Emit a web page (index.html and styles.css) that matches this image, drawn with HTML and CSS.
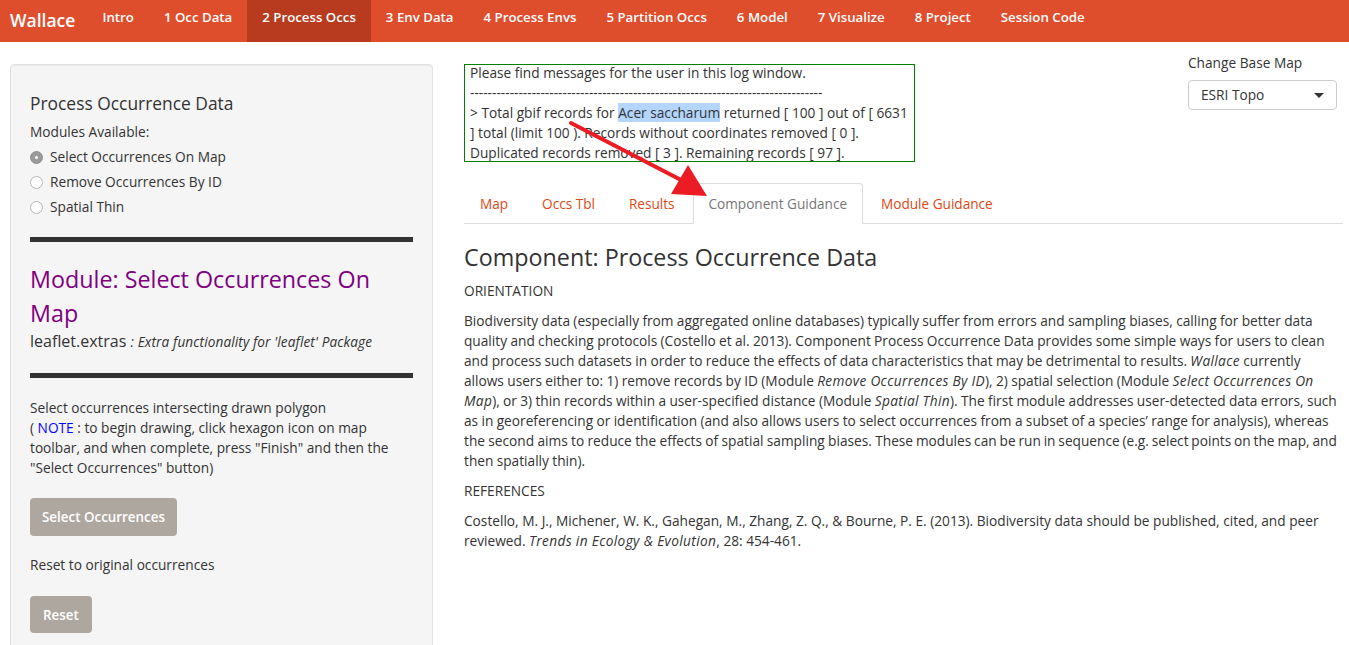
FILE: index.html
```html
<!DOCTYPE html>
<html>
<head>
<meta charset="utf-8">
<link rel="stylesheet" href="styles.css">
</head>
<body>
<nav class="navbar">
  <a class="brand">Wallace</a>
  <ul class="nav">
    <li><a>Intro</a></li>
    <li><a>1 Occ Data</a></li>
    <li class="active"><a>2 Process Occs</a></li>
    <li><a>3 Env Data</a></li>
    <li><a>4 Process Envs</a></li>
    <li><a>5 Partition Occs</a></li>
    <li><a>6 Model</a></li>
    <li><a>7 Visualize</a></li>
    <li><a>8 Project</a></li>
    <li><a>Session Code</a></li>
  </ul>
</nav>
<div class="page">
  <aside class="well">
    <h4 class="comp-title">Process Occurrence Data</h4>
    <div class="label">Modules Available:</div>
    <div class="radios">
      <label class="radio"><span class="dot checked"></span>Select Occurrences On Map</label>
      <label class="radio"><span class="dot"></span>Remove Occurrences By ID</label>
      <label class="radio"><span class="dot"></span>Spatial Thin</label>
    </div>
    <hr class="bar">
    <h3 class="mod-title">Module: Select Occurrences On Map</h3>
    <div class="pkg">leaflet.extras <em>: Extra functionality for 'leaflet' Package</em></div>
    <hr class="bar bar2">
    <p class="desc">Select occurrences intersecting drawn polygon<br>( <span class="note">NOTE</span> : to begin drawing, click hexagon icon on map toolbar, and when complete, press "Finish" and then the "Select Occurrences" button)</p>
    <button class="btn">Select Occurrences</button>
    <p class="desc reset-label">Reset to original occurrences</p>
    <button class="btn btn-reset">Reset</button>
  </aside>
  <main class="main">
    <div class="top">
      <div class="log"><div class="log-inner">Please find messages for the user in this log window.<br>--------------------------------------------------------------------------------<br>&gt; Total gbif records for <span class="sel">Acer saccharum</span> returned [ 100 ] out of [ 6631 ] total (limit 100 ). Records without coordinates removed [ 0 ]. Duplicated records removed [ 3 ]. Remaining records [ 97 ].</div></div>
      <div class="basemap">
        <div class="bm-label">Change Base Map</div>
        <div class="select">ESRI Topo<span class="caret"></span></div>
      </div>
    </div>
    <ul class="tabs">
      <li><a>Map</a></li>
      <li><a>Occs Tbl</a></li>
      <li><a>Results</a></li>
      <li class="active"><a>Component Guidance</a></li>
      <li><a>Module Guidance</a></li>
    </ul>
    <div class="guide">
      <h3 class="g-title">Component: Process Occurrence Data</h3>
      <p class="caps">ORIENTATION</p>
      <p class="body-text">Biodiversity data (especially from aggregated online databases) typically suffer from errors and sampling biases, calling for better data quality and checking protocols (Costello et al. 2013). Component Process Occurrence Data provides some simple ways for users to clean and process such datasets in order to reduce the effects of data characteristics that may be detrimental to results. <em>Wallace</em> currently allows users either to: 1) remove records by ID (Module <em>Remove Occurrences By ID</em>), 2) spatial selection (Module <em>Select Occurrences On Map</em>), or 3) thin records within a user-specified distance (Module <em>Spatial Thin</em>). The first module addresses user-detected data errors, such as in georeferencing or identification (and also allows users to select occurrences from a subset of a species’ range for analysis), whereas the second aims to reduce the effects of spatial sampling biases. <span class="tight">These modules can be run in sequence (e.g. select points on the map, and</span> then spatially thin).</p>
      <p class="caps">REFERENCES</p>
      <p>Costello, M. J., Michener, W. K., Gahegan, M., Zhang, Z. Q., &amp; Bourne, P. E. (2013). Biodiversity data should be published, cited, and peer reviewed. <em>Trends in Ecology &amp; Evolution</em>, 28: 454-461.</p>
    </div>
  </main>
</div>
<svg class="arrow" width="1349" height="645" viewBox="0 0 1349 645">
  <line x1="571" y1="123" x2="683" y2="181" stroke="#ec1c24" stroke-width="4" stroke-linecap="round"/>
  <polygon points="707,196 671,194 688,165" fill="#ec1c24"/>
</svg>
</body>
</html>
```

FILE: styles.css
```css
* { box-sizing: border-box; }
html, body { margin: 0; padding: 0; }
body {
  font-family: "Open Sans", "Noto Sans", sans-serif;
  font-size: 13.7px;
  line-height: 20px;
  color: #333;
  background: #fff;
  width: 1349px;
  height: 645px;
  overflow: hidden;
  position: relative;
}
.navbar {
  height: 42px;
  background: #df4e2c;
  display: flex;
  align-items: stretch;
  padding-left: 10px;
}
.brand {
  color: #fff;
  font-size: 17.5px;
  font-weight: 600;
  margin-right: 12px;
  display: flex;
  align-items: center;
  padding-bottom: 3px;
}
.nav {
  list-style: none;
  margin: 0;
  padding: 0;
  display: flex;
}
.nav li { display: flex; }
.nav a {
  color: #fff;
  font-weight: 600;
  font-size: 13.26px;
  padding: 0 15px;
  display: flex;
  align-items: center;
  padding-bottom: 9px;
}
.nav li.active a { background: #b83b1f; }
.page {
  display: flex;
  padding: 22px 0 0 10px;
  gap: 31px;
}
.well {
  width: 423px;
  height: 600px;
  flex: none;
  background: #f5f5f5;
  border: 1px solid #e3e3e3;
  border-radius: 4px;
  padding: 27px 19px 0 19px;
  box-shadow: inset 0 1px 1px rgba(0,0,0,.05);
}
.comp-title {
  font-size: 17.4px;
  font-weight: 400;
  margin: 0 0 8px;
  line-height: 22px;
}
.label { margin-bottom: 5px; }
.radios { display: flex; flex-direction: column; gap: 5px; }
.radio { display: flex; align-items: center; }
.dot {
  width: 13px; height: 13px;
  border-radius: 50%;
  border: 1px solid #b5b5b5;
  background: #fff;
  margin-right: 7px;
  position: relative;
}
.dot.checked { background: #9b9b9b; border-color: #8f8f8f; }
.dot.checked::after {
  content: "";
  position: absolute;
  width: 3px; height: 3px;
  border-radius: 50%;
  background: #fff;
  left: 4px; top: 4px;
}
.bar {
  border: 0;
  height: 5px;
  background: #333;
  margin: 20px 0 0;
}
.mod-title {
  color: #800080;
  font-size: 23.3px;
  font-weight: 400;
  line-height: 34px;
  margin: 20px 0 0;
}
.pkg { font-size: 16px; line-height: 20px; margin-top: 1px; }
.pkg em { font-size: 13.6px; letter-spacing: 0.12px; }
.bar2 { margin-top: 21px; }
.desc { margin: 20px 0 0; }
.desc:first-of-type { padding-right: 6px; }
.note { color: #0000ff; }
.btn {
  display: block;
  margin-top: 20px;
  background: #aea79f;
  color: #fff;
  border: 0;
  border-radius: 4px;
  font-family: inherit;
  font-weight: 600;
  font-size: 13.4px;
  padding: 0 12px;
  height: 38px;
}
.reset-label { margin-top: 19px; }
.btn-reset { height: 37px; margin-top: 21px; padding: 0 13px; }
.main { flex: 1; display: flex; flex-direction: column; padding-right: 6px; }
.top { display: flex; justify-content: space-between; }
.log {
  width: 451px;
  height: 98px;
  border: 1px solid #008000;
  padding: 0 5px;
  line-height: 20px;
  overflow: hidden;
}
.log-inner { margin-top: -2px; }
.sel { background: #b4d5fe; }
.basemap { width: 149px; margin-right: 6px; margin-top: -11px; }
.bm-label { line-height: 20px; margin-bottom: 7px; }
.select {
  height: 30px;
  border: 1px solid #ccc;
  border-radius: 4px;
  padding: 0 12px;
  display: flex;
  align-items: center;
  justify-content: space-between;
}
.caret {
  width: 0; height: 0;
  border-left: 5px solid transparent;
  border-right: 5px solid transparent;
  border-top: 5px solid #333;
}
.tabs {
  list-style: none;
  margin: 21px 0 0;
  padding: 0;
  display: flex;
  border-bottom: 1px solid #ddd;
  height: 41px;
  font-size: 13.6px;
}
.tabs li { display: flex; margin-bottom: -1px; }
.tabs a {
  color: #dd4814;
  padding: 0 15px;
  display: flex;
  align-items: center;
  border: 1px solid transparent;
  border-radius: 4px 4px 0 0;
  margin-right: 2px;
}
.tabs li.active a {
  color: #777;
  background: #fff;
  border-color: #ddd #ddd transparent;
}
.guide { padding-top: 15px; }
.g-title { font-size: 23.3px; font-weight: 400; margin: 0 0 6px; line-height: 36px; }
.guide p { margin: 0 0 10px; }
.guide .body-text { word-spacing: -0.2px; }
.guide .tight { word-spacing: -0.7px; }
.guide em { letter-spacing: 0.35px; }
.arrow { position: absolute; left: 0; top: 0; pointer-events: none; }
```
